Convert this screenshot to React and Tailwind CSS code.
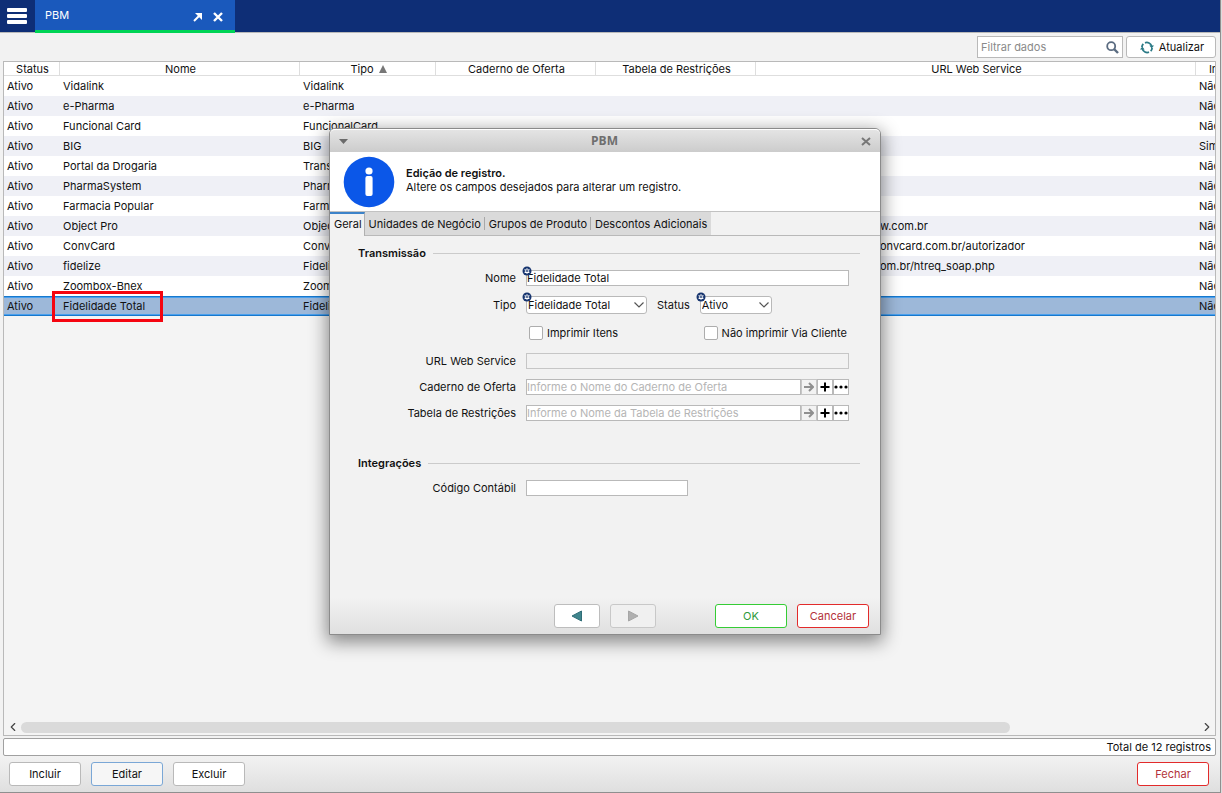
import { useState } from "react";
import { ChevronLeft, ChevronRight } from "lucide-react";
import clsx from "clsx";

const columns = [
  { label: "Status", width: "w-[56px]" },
  { label: "Nome", width: "w-[240px]" },
  { label: "Tipo", width: "w-[136px]", sorted: true },
  { label: "Caderno de Oferta", width: "w-[160px]" },
  { label: "Tabela de Restrições", width: "w-[160px]" },
  { label: "URL Web Service", width: "w-[440px]" },
  { label: "Imprimir Itens", width: "w-[96px]" },
];

const rows = [
  { nome: "Vidalink", tipo: "Vidalink", itens: "Não" },
  { nome: "e-Pharma", tipo: "e-Pharma", itens: "Não" },
  { nome: "Funcional Card", tipo: "FuncionalCard", itens: "Não" },
  { nome: "BIG", tipo: "BIG", itens: "Sim" },
  { nome: "Portal da Drogaria", tipo: "Trans", itens: "Não" },
  { nome: "PharmaSystem", tipo: "PharmaSystem", itens: "Não" },
  { nome: "Farmacia Popular", tipo: "Farmacia Popular", itens: "Não" },
  { nome: "Object Pro", tipo: "Object Pro", url: "w.com.br", itens: "Não" },
  { nome: "ConvCard", tipo: "ConvCard", url: "onvcard.com.br/autorizador", itens: "Não" },
  { nome: "fidelize", tipo: "Fidelize", url: "om.br/htreq_soap.php", itens: "Não" },
  { nome: "Zoombox-Bnex", tipo: "Zoombox", itens: "Não" },
  { nome: "Fidelidade Total", tipo: "Fidelidade Total", itens: "Não" },
];

const tabs = ["Geral", "Unidades de Negócio", "Grupos de Produto", "Descontos Adicionais"];

function TopBar() {
  return (
    <header className="flex h-[33px] border-b border-[#b9b9b9] bg-[#0e2e76]">
      <button aria-label="Menu" className="flex w-[35px] items-center pl-[7px]">
        <svg width="20" height="16" viewBox="0 0 20 16" fill="#fff">
          <rect width="20" height="4" rx="1" />
          <rect y="6" width="20" height="4" rx="1" />
          <rect y="12" width="20" height="4" rx="1" />
        </svg>
      </button>
      <div className="flex h-[33px] w-[200px] items-center border-b-[3px] border-[#00d455] bg-[#1a59bc] px-[10px] text-white">
        <span className="flex-1">PBM</span>
        <button aria-label="Destacar aba" className="mt-[3px] mr-[10px]">
          <svg width="10" height="10" viewBox="0 0 10 10" fill="none" stroke="#fff" strokeWidth="2">
            <path d="M1 9L7.5 2.5" />
            <path d="M2 1H9V8L6.5 5.5L4.5 3.5Z" fill="#fff" stroke="none" />
          </svg>
        </button>
        <button aria-label="Fechar aba" className="mt-[3px] mr-[2px]">
          <svg width="10" height="10" viewBox="0 0 10 10" stroke="#fff" strokeWidth="2.4">
            <path d="M1 1L9 9M9 1L1 9" />
          </svg>
        </button>
      </div>
    </header>
  );
}

function Toolbar() {
  return (
    <div className="flex h-[28px] items-center justify-end gap-[3px] pr-[4px]">
      <label className="flex h-[22px] w-[146px] items-center border border-[#b9b9b9] bg-white px-[3px]">
        <input
          type="text"
          aria-label="Filtrar dados"
          placeholder="Filtrar dados"
          className="w-full min-w-0 outline-none placeholder:text-[#8a8a8a]"
        />
        <svg width="13" height="13" viewBox="0 0 13 13" fill="none" stroke="#5a6b80" className="shrink-0">
          <circle cx="5.2" cy="5.2" r="4" strokeWidth="1.8" />
          <path d="M8 8L12 12" strokeWidth="2.4" />
        </svg>
      </label>
      <button className="flex h-[22px] w-[90px] items-center justify-center gap-[5px] rounded-[3px] border border-[#b9b9b9] bg-white pl-[2px]">
        <svg width="14" height="13" viewBox="0 0 14 13" fill="none" stroke="#2b7a86" strokeWidth="1.8">
          <path d="M5 1.8A5 5 0 0 1 11.6 5M9 11.2A5 5 0 0 1 2.4 8" />
          <path d="M1.9 6A5 5 0 0 1 3.3 2.8M12.1 7A5 5 0 0 1 10.7 10.2" />
          <path d="M9.4 4.6H14L11.7 7.6ZM4.6 8.4H0L2.3 5.4Z" fill="#2b7a86" stroke="none" />
        </svg>
        Atualizar
      </button>
    </div>
  );
}

function Grid({ selected, onSelect }) {
  return (
    <div className="mr-[4px] ml-[3px] flex flex-1 flex-col overflow-hidden border border-[#b9b9b9] bg-[#f4f4f4]">
      <div className="flex-1 overflow-hidden">
        <table className="w-[1288px] table-fixed border-separate border-spacing-0">
          <thead>
            <tr className="h-[14px] bg-white">
              {columns.map((col) => (
                <th
                  key={col.label}
                  className={clsx(
                    "h-[14px] border-r border-b border-[#dedede] p-0 pt-px pl-[2px] text-center leading-[12px] font-normal whitespace-nowrap",
                    col.width
                  )}
                >
                  {col.label}
                  {col.sorted && (
                    <svg width="8" height="8" viewBox="0 0 8 8" fill="#777" className="ml-[5px] inline-block align-baseline">
                      <path d="M4 0L8 8H0Z" />
                    </svg>
                  )}
                </th>
              ))}
            </tr>
          </thead>
          <tbody>
            {rows.map((row, i) => {
              const active = i === selected;
              const cell = clsx(
                "h-[20px] p-0 pl-[3px] whitespace-nowrap",
                active && "shadow-[inset_0_1px_#1878cc,inset_0_-1px_#1878cc,inset_0_2px_#4aa0ee,inset_0_-2px_#4aa0ee]"
              );
              return (
                <tr
                  key={row.nome}
                  onClick={() => onSelect(i)}
                  className={clsx(active ? "bg-[#9db8d9]" : i % 2 ? "bg-[#eff0f6]" : "bg-white")}
                >
                  <td className={cell}>Ativo</td>
                  <td className={clsx(cell, "relative")}>
                    {row.nome}
                    {active && (
                      <span className="absolute top-[-5px] left-[-8px] h-[31px] w-[111px] border-[3px] border-[#f50510]" />
                    )}
                  </td>
                  <td className={cell}>{row.tipo}</td>
                  <td className={cell} />
                  <td className={cell} />
                  <td className={cell}>
                    {row.url && <span className="pl-[121px]">{row.url}</span>}
                  </td>
                  <td className={cell}>{row.itens}</td>
                </tr>
              );
            })}
          </tbody>
        </table>
      </div>
      <div className="flex h-[16px] items-center">
        <button aria-label="Rolar para a esquerda" className="flex w-[17px] justify-center">
          <ChevronLeft size={14} color="#444" />
        </button>
        <div className="flex-1">
          <div className="h-[11px] w-[84%] rounded-full bg-[#dadada]" />
        </div>
        <button aria-label="Rolar para a direita" className="flex w-[17px] justify-center">
          <ChevronRight size={14} color="#444" />
        </button>
      </div>
    </div>
  );
}

function RequiredMark() {
  return (
    <svg width="10" height="10" viewBox="0 0 10 10" className="absolute -top-1 -left-1 z-10">
      <circle cx="5" cy="5" r="4.5" fill="#17356f" />
      <path d="M5 2.2V7.8M2.6 3.6L7.4 6.4M7.4 3.6L2.6 6.4" stroke="#fff" strokeWidth="1.1" />
      <circle cx="5" cy="5" r="0.9" fill="#17356f" />
    </svg>
  );
}

function Section({ title }) {
  return (
    <div className="flex h-[14px] items-center gap-[7px] pr-[20px] pl-[28px]">
      <h3 className="font-semibold">{title}</h3>
      <div className="h-px flex-1 bg-[#cbcbcb]" />
    </div>
  );
}

function Field({ label, id, children }) {
  return (
    <div className="grid grid-cols-[186px_1fr] items-center gap-x-[10px] pr-[31px]">
      <label htmlFor={id} className="text-right">{label}</label>
      {children}
    </div>
  );
}

function Select({ id, options, className }) {
  return (
    <div className={clsx("relative", className)}>
      <RequiredMark />
      <select
        id={id}
        className="block h-[18px] w-full appearance-none rounded-[3px] border border-[#b9b9b9] bg-white pl-px leading-[16px] outline-none"
      >
        {options.map((o) => (
          <option key={o}>{o}</option>
        ))}
      </select>
      <svg
        width="10"
        height="6"
        viewBox="0 0 10 6"
        fill="none"
        stroke="#555"
        strokeWidth="1.2"
        className="pointer-events-none absolute top-[6px] right-[3px]"
      >
        <path d="M0.5 0.5L5 5L9.5 0.5" />
      </svg>
    </div>
  );
}

function Check({ label }) {
  return (
    <label className="flex items-center gap-[4px]">
      <input type="checkbox" className="size-[14px] appearance-none rounded-[2px] border border-[#adadad] bg-white checked:bg-[#3d7fc4]" />
      {label}
    </label>
  );
}

function Lookup({ id, placeholder }) {
  return (
    <div className="flex h-[16px]">
      <input
        id={id}
        type="text"
        placeholder={placeholder}
        className="min-w-0 flex-1 border border-[#b9b9b9] bg-white outline-none placeholder:text-[#b5b5b5]"
      />
      <button aria-label="Abrir" disabled className="flex w-[16px] items-center justify-center border border-[#c6c6c6] bg-[#f2f2f2]">
        <svg width="10" height="10" viewBox="0 0 10 10" fill="none" stroke="#8f8f8f" strokeWidth="2">
          <path d="M0 5H9M5 1L9 5L5 9" />
        </svg>
      </button>
      <button aria-label="Adicionar" className="flex w-[16px] items-center justify-center border border-[#b9b9b9] bg-white">
        <svg width="10" height="10" viewBox="0 0 10 10" stroke="#000" strokeWidth="2">
          <path d="M5 0.5V9.5M0.5 5H9.5" />
        </svg>
      </button>
      <button aria-label="Pesquisar" className="flex w-[16px] items-center justify-center border border-[#b9b9b9] bg-white">
        <svg width="14" height="4" viewBox="0 0 14 4" className="shrink-0">
          <circle cx="2" cy="2" r="1.6" />
          <circle cx="7" cy="2" r="1.6" />
          <circle cx="12" cy="2" r="1.6" />
        </svg>
      </button>
    </div>
  );
}

const input = "h-[16px] w-full border border-[#b9b9b9] bg-white outline-none";

function EditDialog() {
  const [tab, setTab] = useState(0);

  return (
    <section
      role="dialog"
      aria-label="PBM"
      className="absolute top-[128px] left-[329px] z-20 w-[552px] rounded-t-[6px] border border-[#8b8b8b] bg-[#f2f2f2] shadow-[0_5px_18px_2px_rgba(0,0,0,0.45)]"
    >
      <div className="flex h-[23px] items-center justify-between rounded-t-[5px] border-t border-white bg-linear-to-b from-[#e4e4e4] to-[#cccccc] px-[9px]">
        <button aria-label="Opções da janela">
          <svg width="9" height="5" viewBox="0 0 9 5" fill="#6b6b6b">
            <path d="M0 0H9L4.5 5Z" />
          </svg>
        </button>
        <h2 className="font-['Open_Sans',sans-serif] text-[12px] font-bold text-[#6e6e6e]">PBM</h2>
        <button aria-label="Fechar janela">
          <svg width="10" height="9" viewBox="0 0 10 9" fill="none" stroke="#777" strokeWidth="2">
            <path d="M1 1L9 8M9 1L1 8" />
          </svg>
        </button>
      </div>

      <div className="flex h-[60px] items-center gap-[11px] border-b border-[#c2c2c2] bg-white pl-[13px]">
        <svg width="52" height="52" viewBox="0 0 52 52" className="shrink-0">
          <circle cx="26" cy="26" r="25.3" fill="#0b57e8" />
          <circle cx="26" cy="15" r="3.6" fill="#fff" />
          <rect x="22.4" y="20" width="7.2" height="20" rx="2" fill="#fff" />
        </svg>
        <div className="pb-[3px] leading-[14px]">
          <p className="font-semibold">Edição de registro.</p>
          <p>Altere os campos desejados para alterar um registro.</p>
        </div>
      </div>

      <div role="tablist" className="flex h-[24px] border-b border-[#b9b9b9]">
        {tabs.map((name, i) => (
          <button
            key={name}
            role="tab"
            aria-selected={i === tab}
            onClick={() => setTab(i)}
            className={clsx(
              "flex items-center whitespace-nowrap",
              i === tab
                ? "h-[24px] border-t-2 border-r border-t-[#3c83c9] border-r-[#b0b0b0] bg-[#f2f2f2] pr-[2px] pb-[2px] pl-[4px]"
                : "h-[23px] bg-[#dadada] pl-[4px]"
            )}
          >
            {name}
            {i !== tab && (
              <span className={clsx("ml-[3px] h-[13px] w-px", i < tabs.length - 1 && "bg-[#a8a8a8]")} />
            )}
          </button>
        ))}
      </div>

      <div className="flex flex-col gap-[10px] pt-[10px] pb-[102px]">
        <Section title="Transmissão" />
        <Field label="Nome" id="nome">
          <div className="relative h-[16px]">
            <RequiredMark />
            <input id="nome" type="text" defaultValue="Fidelidade Total" className={clsx(input, "block")} />
          </div>
        </Field>
        <Field label="Tipo" id="tipo">
          <div className="flex items-center gap-[10px]">
            <Select id="tipo" options={["Fidelidade Total", "Vidalink", "e-Pharma"]} className="w-[121px]" />
            <label htmlFor="status">Status</label>
            <Select id="status" options={["Ativo", "Inativo"]} className="w-[72px]" />
          </div>
        </Field>
        <div className="flex h-[19px] items-start justify-between pt-[2px] pr-[33px] pl-[199px]">
          <Check label="Imprimir Itens" />
          <Check label="Não imprimir Via Cliente" />
        </div>
        <Field label="URL Web Service" id="url">
          <input id="url" type="text" disabled className="h-[16px] w-full border border-[#c6c6c6] bg-[#f2f2f2]" />
        </Field>
        <Field label="Caderno de Oferta" id="caderno">
          <Lookup id="caderno" placeholder="Informe o Nome do Caderno de Oferta" />
        </Field>
        <Field label="Tabela de Restrições" id="tabela">
          <Lookup id="tabela" placeholder="Informe o Nome da Tabela de Restrições" />
        </Field>
        <div className="pt-[25px]">
          <Section title="Integrações" />
        </div>
        <Field label="Código Contábil" id="codigo">
          <div className="flex w-[162px]">
            <input id="codigo" type="text" className={input} />
          </div>
        </Field>
      </div>

      <div className="flex h-[36px] items-center justify-end gap-[10px] bg-linear-to-b from-[#f2f2f2] to-[#e0e0e0] pr-[11px]">
        <button aria-label="Anterior" className="flex h-[24px] w-[46px] items-center justify-center rounded-[3px] border border-[#bdbdbd] bg-white">
          <svg width="12" height="12" viewBox="0 0 12 12" fill="#3f858d" stroke="#2f6d77" strokeLinejoin="round">
            <path d="M1 6L10.5 1V11Z" />
          </svg>
        </button>
        <button aria-label="Próximo" disabled className="mr-[49px] flex h-[24px] w-[46px] items-center justify-center rounded-[3px] border border-[#c8c8c8] bg-[#f0f0f0]">
          <svg width="12" height="12" viewBox="0 0 12 12" fill="#b0b0b0" stroke="#a6a6a6" strokeLinejoin="round">
            <path d="M11 6L1.5 1V11Z" />
          </svg>
        </button>
        <button className="h-[24px] w-[72px] rounded-[3px] border border-[#35cc35] bg-white text-[#2f9a3c]">OK</button>
        <button className="h-[24px] w-[72px] rounded-[3px] border border-[#e22b2b] bg-white text-[#b3323a]">Cancelar</button>
      </div>
    </section>
  );
}

export default function App() {
  const [selected, setSelected] = useState(11);
  const action = "h-[24px] w-[72px] rounded-[3px] border border-[#b9b9b9] bg-white";

  return (
    <div className="flex min-h-screen bg-[#dcdcdc] font-[Inter,sans-serif] text-[11px] leading-[14px] text-[#111]">
      <main className="relative mr-px flex min-w-0 flex-1 flex-col border-r border-b border-[#8f8f8f] bg-[#f2f2f2]">
        <TopBar />
        <Toolbar />
        <Grid selected={selected} onSelect={setSelected} />
        <div className="mt-[2px] mr-[4px] ml-[3px] flex h-[18px] items-center justify-end rounded-[2px] border border-[#a0a0a0] bg-white pr-[4px]">
          Total de 12 registros
        </div>
        <footer className="flex h-[36px] items-center gap-[10px] bg-linear-to-b from-[#f2f2f2] to-[#dfdfdf] pr-[11px] pl-[9px]">
          <button className={action}>Incluir</button>
          <button className="h-[24px] w-[72px] rounded-[3px] border border-[#7aa7d6] bg-[#f6f6f6]">Editar</button>
          <button className={action}>Excluir</button>
          <button className="ml-auto h-[24px] w-[72px] rounded-[3px] border border-[#e22b2b] bg-white text-[#b3323a]">
            Fechar
          </button>
        </footer>
        <EditDialog />
      </main>
    </div>
  );
}
